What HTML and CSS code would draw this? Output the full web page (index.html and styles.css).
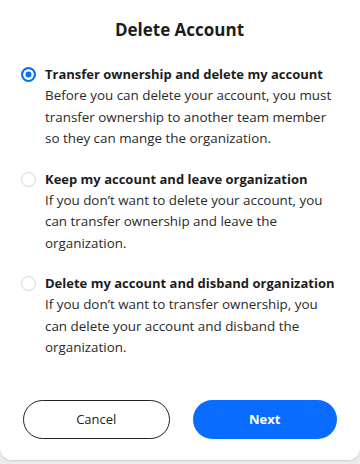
FILE: index.html
```html
<!DOCTYPE html>
<html lang="en">

<head>
    <meta charset="UTF-8">
    <meta name="viewport" content="width=device-width, initial-scale=1.0">
    <title>Delete Account</title>
    <link rel="stylesheet" href="styles.css">
</head>

<body>
    <div class="modal">
        <h1 class="modal-title">Delete Account</h1>

        <div class="options">
            <label class="option">
                <span class="radio checked"></span>
                <span class="option-text">
                    <span class="option-title">Transfer ownership and delete my account</span>
                    <span class="option-desc">Before you can delete your account, you must transfer ownership to another team member so they can mange the organization.</span>
                </span>
            </label>

            <label class="option">
                <span class="radio"></span>
                <span class="option-text">
                    <span class="option-title">Keep my account and leave organization</span>
                    <span class="option-desc">If you don’t want to delete your account, you can transfer ownership and leave the organization.</span>
                </span>
            </label>

            <label class="option">
                <span class="radio"></span>
                <span class="option-text">
                    <span class="option-title">Delete my account and disband organization</span>
                    <span class="option-desc">If you don’t want to transfer ownership, you can delete your account and disband the organization.</span>
                </span>
            </label>
        </div>

        <div class="actions">
            <button class="btn btn-outline">Cancel</button>
            <button class="btn btn-primary">Next</button>
        </div>
    </div>
</body>

</html>
```

FILE: styles.css
```css
html,
body {
    margin: 0;
    padding: 0;
}

body {
    background-color: #ececec;
    font-family: "Open Sans", sans-serif;
    color: #222;
    height: 464px;
}

.modal {
    background-color: white;
    border-radius: 0 0 12px 12px;
    box-shadow: 0 1px 2px rgba(0, 0, 0, 0.12);
    height: 460px;
    box-sizing: border-box;
    padding: 19px 22px 0 21px;
}

.modal-title {
    margin: 0;
    text-align: center;
    font-size: 17px;
    font-weight: 700;
    line-height: 22px;
    color: #1d1d1d;
}

.options {
    display: flex;
    flex-direction: column;
    gap: 18px;
    margin-top: 22px;
}

.option {
    display: flex;
    gap: 9px;
    align-items: flex-start;
}

.radio {
    flex: none;
    box-sizing: border-box;
    width: 15px;
    height: 15px;
    margin-top: 4px;
    border-radius: 50%;
    border: 1px solid #d6d6d6;
    background-color: white;
}

.radio.checked {
    border: 2px solid #0d6efd;
    background-color: #0d6efd;
    box-shadow: inset 0 0 0 2.5px white;
}

.option-text {
    display: flex;
    flex-direction: column;
}

.option-title {
    font-size: 13px;
    font-weight: 700;
    line-height: 22px;
    color: #1d1d1d;
}

.option-desc {
    font-size: 13.4px;
    line-height: 21.5px;
    color: #2a2a2a;
}

.actions {
    display: flex;
    gap: 23px;
    margin-top: 41px;
    padding-left: 2px;
    padding-right: 1px;
}

.btn {
    flex: 1;
    height: 39px;
    border-radius: 20px;
    font-family: "Open Sans", sans-serif;
    font-size: 13px;
}

.btn-outline {
    background-color: white;
    border: 1px solid #222;
    color: #222;
}

.btn-primary {
    background-color: #0a6cff;
    border: none;
    color: white;
    font-weight: 700;
}
```
